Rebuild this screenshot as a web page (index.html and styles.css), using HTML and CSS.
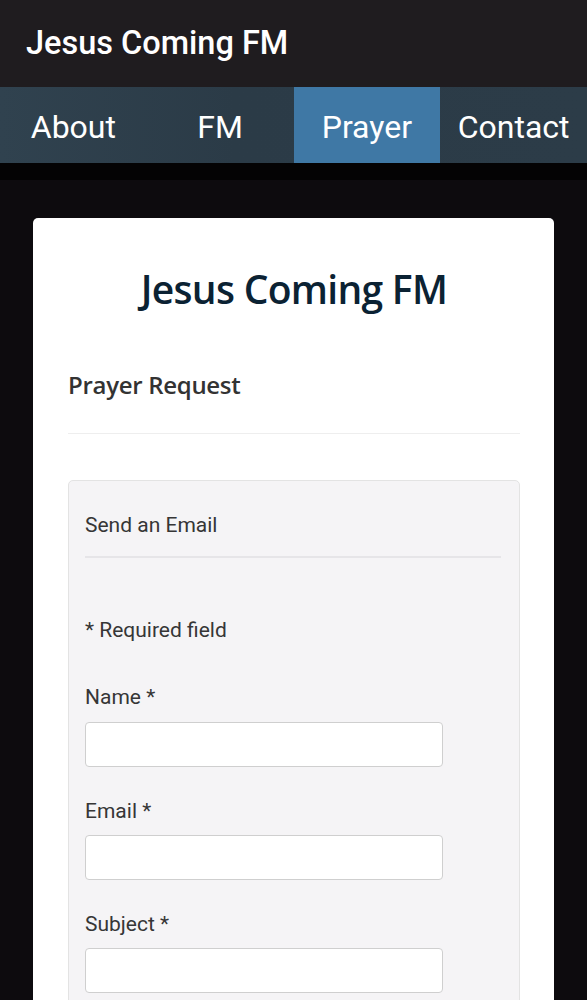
FILE: index.html
```html
<!DOCTYPE html>
<html lang="en">
<head>
<meta charset="utf-8">
<title>Jesus Coming FM</title>
<link rel="stylesheet" href="styles.css">
</head>
<body>
<header class="appbar">
  <div class="appbar-title">Jesus Coming FM</div>
</header>
<nav class="tabs">
  <a class="tab">About</a>
  <a class="tab">FM</a>
  <a class="tab tab-active">Prayer</a>
  <a class="tab">Contact</a>
</nav>
<div class="strip"></div>
<main class="page">
  <section class="card">
    <h1 class="card-title">Jesus Coming FM</h1>
    <h2 class="card-subtitle">Prayer Request</h2>
    <hr class="rule">
    <div class="well">
      <div class="well-title">Send an Email</div>
      <hr class="well-rule">
      <p class="required-note">* Required field</p>
      <div class="field field-first">
        <label class="field-label">Name *</label>
        <input class="field-input" type="text">
      </div>
      <div class="field">
        <label class="field-label">Email *</label>
        <input class="field-input" type="text">
      </div>
      <div class="field">
        <label class="field-label">Subject *</label>
        <input class="field-input" type="text">
      </div>
    </div>
  </section>
</main>
</body>
</html>
```

FILE: styles.css
```css
* { box-sizing: border-box; }
html, body {
  margin: 0;
  padding: 0;
  background: #0d0b0e;
  font-family: Roboto, "Liberation Sans", sans-serif;
  height: 1000px;
  overflow: hidden;
}
.appbar {
  height: 87px;
  background: #1f1c1f;
  display: flex;
  align-items: center;
  padding-left: 26px;
}
.appbar-title {
  color: #ffffff;
  font-family: Roboto, sans-serif;
  font-weight: 500;
  font-size: 32.5px;
  line-height: 38px;
  margin-top: -2px;
}
.tabs {
  height: 76px;
  display: grid;
  grid-template-columns: repeat(4, 1fr);
  background: linear-gradient(90deg, #30424f 0%, #2b3b47 40%, #2c3c48 100%);
}
.tab {
  display: flex;
  align-items: center;
  justify-content: center;
  color: #ffffff;
  font-family: Roboto, sans-serif;
  font-weight: 400;
  font-size: 32px;
  padding-top: 4px;
}
.tab-active {
  background: #3f78a5;
}
.strip {
  height: 17px;
  background: #040304;
}
.page {
  padding: 38px 33px 0 33px;
}
.card {
  background: #ffffff;
  border-radius: 5px;
  padding: 47px 34px 40px 35px;
  min-height: 900px;
}
.card-title {
  margin: 0;
  text-align: center;
  font-family: "Open Sans", sans-serif;
  font-weight: 600;
  font-size: 39px;
  line-height: 48px;
  color: #0b2233;
  letter-spacing: -0.7px;
}
.card-subtitle {
  margin: 57px 0 0 0;
  font-family: "Open Sans", sans-serif;
  font-weight: 600;
  font-size: 24px;
  line-height: 30px;
  color: #333333;
  letter-spacing: -0.3px;
}
.rule {
  margin: 33px 0 0 0;
  border: 0;
  height: 1px;
  background: #eeeeee;
}
.well {
  margin-top: 46px;
  background: #f5f4f6;
  border: 1px solid #e3e3e3;
  border-radius: 5px;
  padding: 32px 18px 60px 16px;
  min-height: 600px;
}
.well-title {
  font-size: 21px;
  line-height: 24px;
  color: #363636;
}
.well-rule {
  margin: 19px 0 0 0;
  border: 0;
  height: 2px;
  background: #e6e5e8;
}
.required-note {
  margin: 60px 0 0 0;
  font-size: 21px;
  line-height: 24px;
  color: #363636;
}
.field {
  margin-top: 31.5px;
  display: flex;
  flex-direction: column;
}
.field-first {
  margin-top: 43px;
}
.field-label {
  font-size: 21px;
  line-height: 24px;
  color: #363636;
  margin-bottom: 13px;
}
.field-input {
  width: 358px;
  height: 45px;
  border: 1.5px solid #cfcfcf;
  border-radius: 4px;
  background: #ffffff;
  margin: 0;
  padding: 0 10px;
}
.field + .field .field-label {
  margin-bottom: 12.5px;
}
```
